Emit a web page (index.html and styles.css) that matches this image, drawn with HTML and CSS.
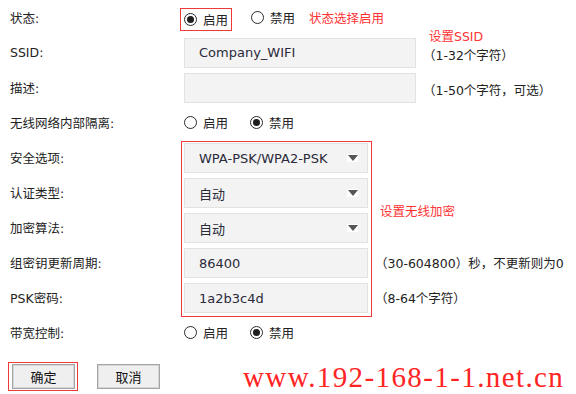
FILE: index.html
```html
<!DOCTYPE html>
<html lang="zh-CN">
<head>
  <meta charset="UTF-8" />
  <title>无线设置</title>
  <link rel="stylesheet" href="styles.css">
</head>
<body>
  <div class="page">
    <div class="row">
      <div class="label">状态:</div>
      <div class="ctrl">
        <span class="opt opt-mark"><span class="radio on"></span>启用</span>
        <span class="opt"><span class="radio"></span>禁用</span>
        <span class="note">状态选择启用</span>
      </div>
    </div>
    <div class="row">
      <div class="label">SSID:</div>
      <div class="ctrl">
        <div class="field wide">Company_WIFI</div>
        <span class="hint">（1-32个字符）<span class="note tag">设置SSID</span></span>
      </div>
    </div>
    <div class="row">
      <div class="label">描述:</div>
      <div class="ctrl">
        <div class="field wide"></div>
        <span class="hint">（1-50个字符，可选）</span>
      </div>
    </div>
    <div class="row">
      <div class="label">无线网络内部隔离:</div>
      <div class="ctrl">
        <span class="opt"><span class="radio"></span>启用</span>
        <span class="opt"><span class="radio on"></span>禁用</span>
      </div>
    </div>

    <div class="group">
      <div class="group-labels">
        <div class="label">安全选项:</div>
        <div class="label">认证类型:</div>
        <div class="label">加密算法:</div>
        <div class="label">组密钥更新周期:</div>
        <div class="label">PSK密码:</div>
      </div>
      <div class="group-box">
        <div class="field select">WPA-PSK/WPA2-PSK<span class="arrow"></span></div>
        <div class="field select">自动<span class="arrow"></span></div>
        <div class="field select">自动<span class="arrow"></span></div>
        <div class="field">86400</div>
        <div class="field">1a2b3c4d</div>
      </div>
      <div class="group-hints">
        <div class="note group-note">设置无线加密</div>
        <div class="hint-row">（30-604800）秒，不更新则为0</div>
        <div class="hint-row">（8-64个字符）</div>
      </div>
    </div>

    <div class="row">
      <div class="label">带宽控制:</div>
      <div class="ctrl">
        <span class="opt"><span class="radio"></span>启用</span>
        <span class="opt"><span class="radio on"></span>禁用</span>
      </div>
    </div>

    <div class="actions">
      <span class="btn-mark"><button class="btn">确定</button></span>
      <button class="btn">取消</button>
    </div>

    <div class="watermark">www.192-168-1-1.net.cn</div>
  </div>
</body>
</html>
```

FILE: styles.css
```css
body {
  margin: 0;
  font-family: 'DejaVu Sans', 'Noto Sans CJK SC', sans-serif;
  font-size: 12.5px;
  color: #222;
  background: #fff;
}

.page {
  position: relative;
  width: 576px;
  height: 394px;
  padding: 0 10px;
  box-sizing: border-box;
  overflow: hidden;
}

.row {
  display: flex;
  align-items: center;
  height: 35px;
}

.label {
  width: 174px;
  flex-shrink: 0;
  white-space: nowrap;
}

.ctrl {
  display: flex;
  align-items: center;
}

/* radio options */
.opt {
  display: inline-flex;
  align-items: center;
  margin-right: 22px;
  white-space: nowrap;
}

.opt-mark {
  margin-left: -4px;
  margin-right: 19px;
  margin-top: 3px;
  padding: 0 3px 0 3px;
  height: 21px;
  border: 1px solid #f03a3a;
}

.radio {
  display: inline-flex;
  align-items: center;
  justify-content: center;
  width: 13px;
  height: 13px;
  margin-right: 6px;
  box-sizing: border-box;
  border: 1px solid #2a2a2a;
  border-radius: 50%;
  background: #fff;
}

.radio.on::after {
  content: '';
  width: 7px;
  height: 7px;
  border-radius: 50%;
  background: #1e1e1e;
}

.note {
  color: #ff3333;
  white-space: nowrap;
}

.ctrl > .note {
  margin-left: -8px;
}

/* text fields */
.field {
  display: flex;
  align-items: center;
  justify-content: space-between;
  width: 184px;
  height: 30px;
  box-sizing: border-box;
  padding: 0 9px 0 14px;
  border: 1px solid #e2e2e2;
  background: #f3f3f3;
  color: #2a2a3a;
  font-size: 13px;
  white-space: nowrap;
}

.field.wide {
  width: 232px;
}

.arrow {
  display: flex;
  justify-content: center;
  width: 11px;
  height: 8px;
  background: #fff;
}

.arrow::before {
  content: '';
  margin-top: 1px;
  border-left: 5px solid transparent;
  border-right: 5px solid transparent;
  border-top: 6px solid #555;
}

.hint {
  position: relative;
  margin-left: 7px;
  margin-top: 3px;
  white-space: nowrap;
}

.note.tag {
  position: absolute;
  left: 6px;
  top: -19px;
}

/* security group */
.group {
  display: flex;
  align-items: flex-start;
  height: 175px;
}

.group-labels .label {
  display: flex;
  align-items: center;
  height: 35px;
}

.group-box {
  display: flex;
  flex-direction: column;
  gap: 5px;
  margin: 1px 0 0 -3px;
  padding: 1px 3px 3px 2px;
  border: 1px solid #f03a3a;
}

.group-hints {
  display: flex;
  flex-direction: column;
  margin-left: 3px;
}

.group-note {
  height: 105px;
  box-sizing: border-box;
  padding: 62px 0 0 5px;
  line-height: 20px;
}

.hint-row {
  display: flex;
  align-items: center;
  height: 35px;
  white-space: nowrap;
}

/* buttons */
.actions {
  display: flex;
  align-items: center;
  gap: 19px;
  margin-top: 12px;
}

.btn-mark {
  display: inline-flex;
  margin-left: -2px;
  padding: 1px 2px 1px 3px;
  border: 1px solid #f03a3a;
}

.btn {
  width: 63px;
  height: 25px;
  padding: 0;
  font-family: 'DejaVu Sans', 'Noto Sans CJK SC', sans-serif;
  font-size: 13px;
  color: #111;
  background: #efefef;
  border: 1px solid #a4a4a4;
  box-shadow: inset 0 0 0 1px #d6d6d6;
}

.watermark {
  position: absolute;
  left: 243px;
  top: 363px;
  font-family: 'Liberation Serif', serif;
  font-size: 29px;
  line-height: 29px;
  letter-spacing: 1.4px;
  color: #ff2424;
  white-space: nowrap;
}
```
